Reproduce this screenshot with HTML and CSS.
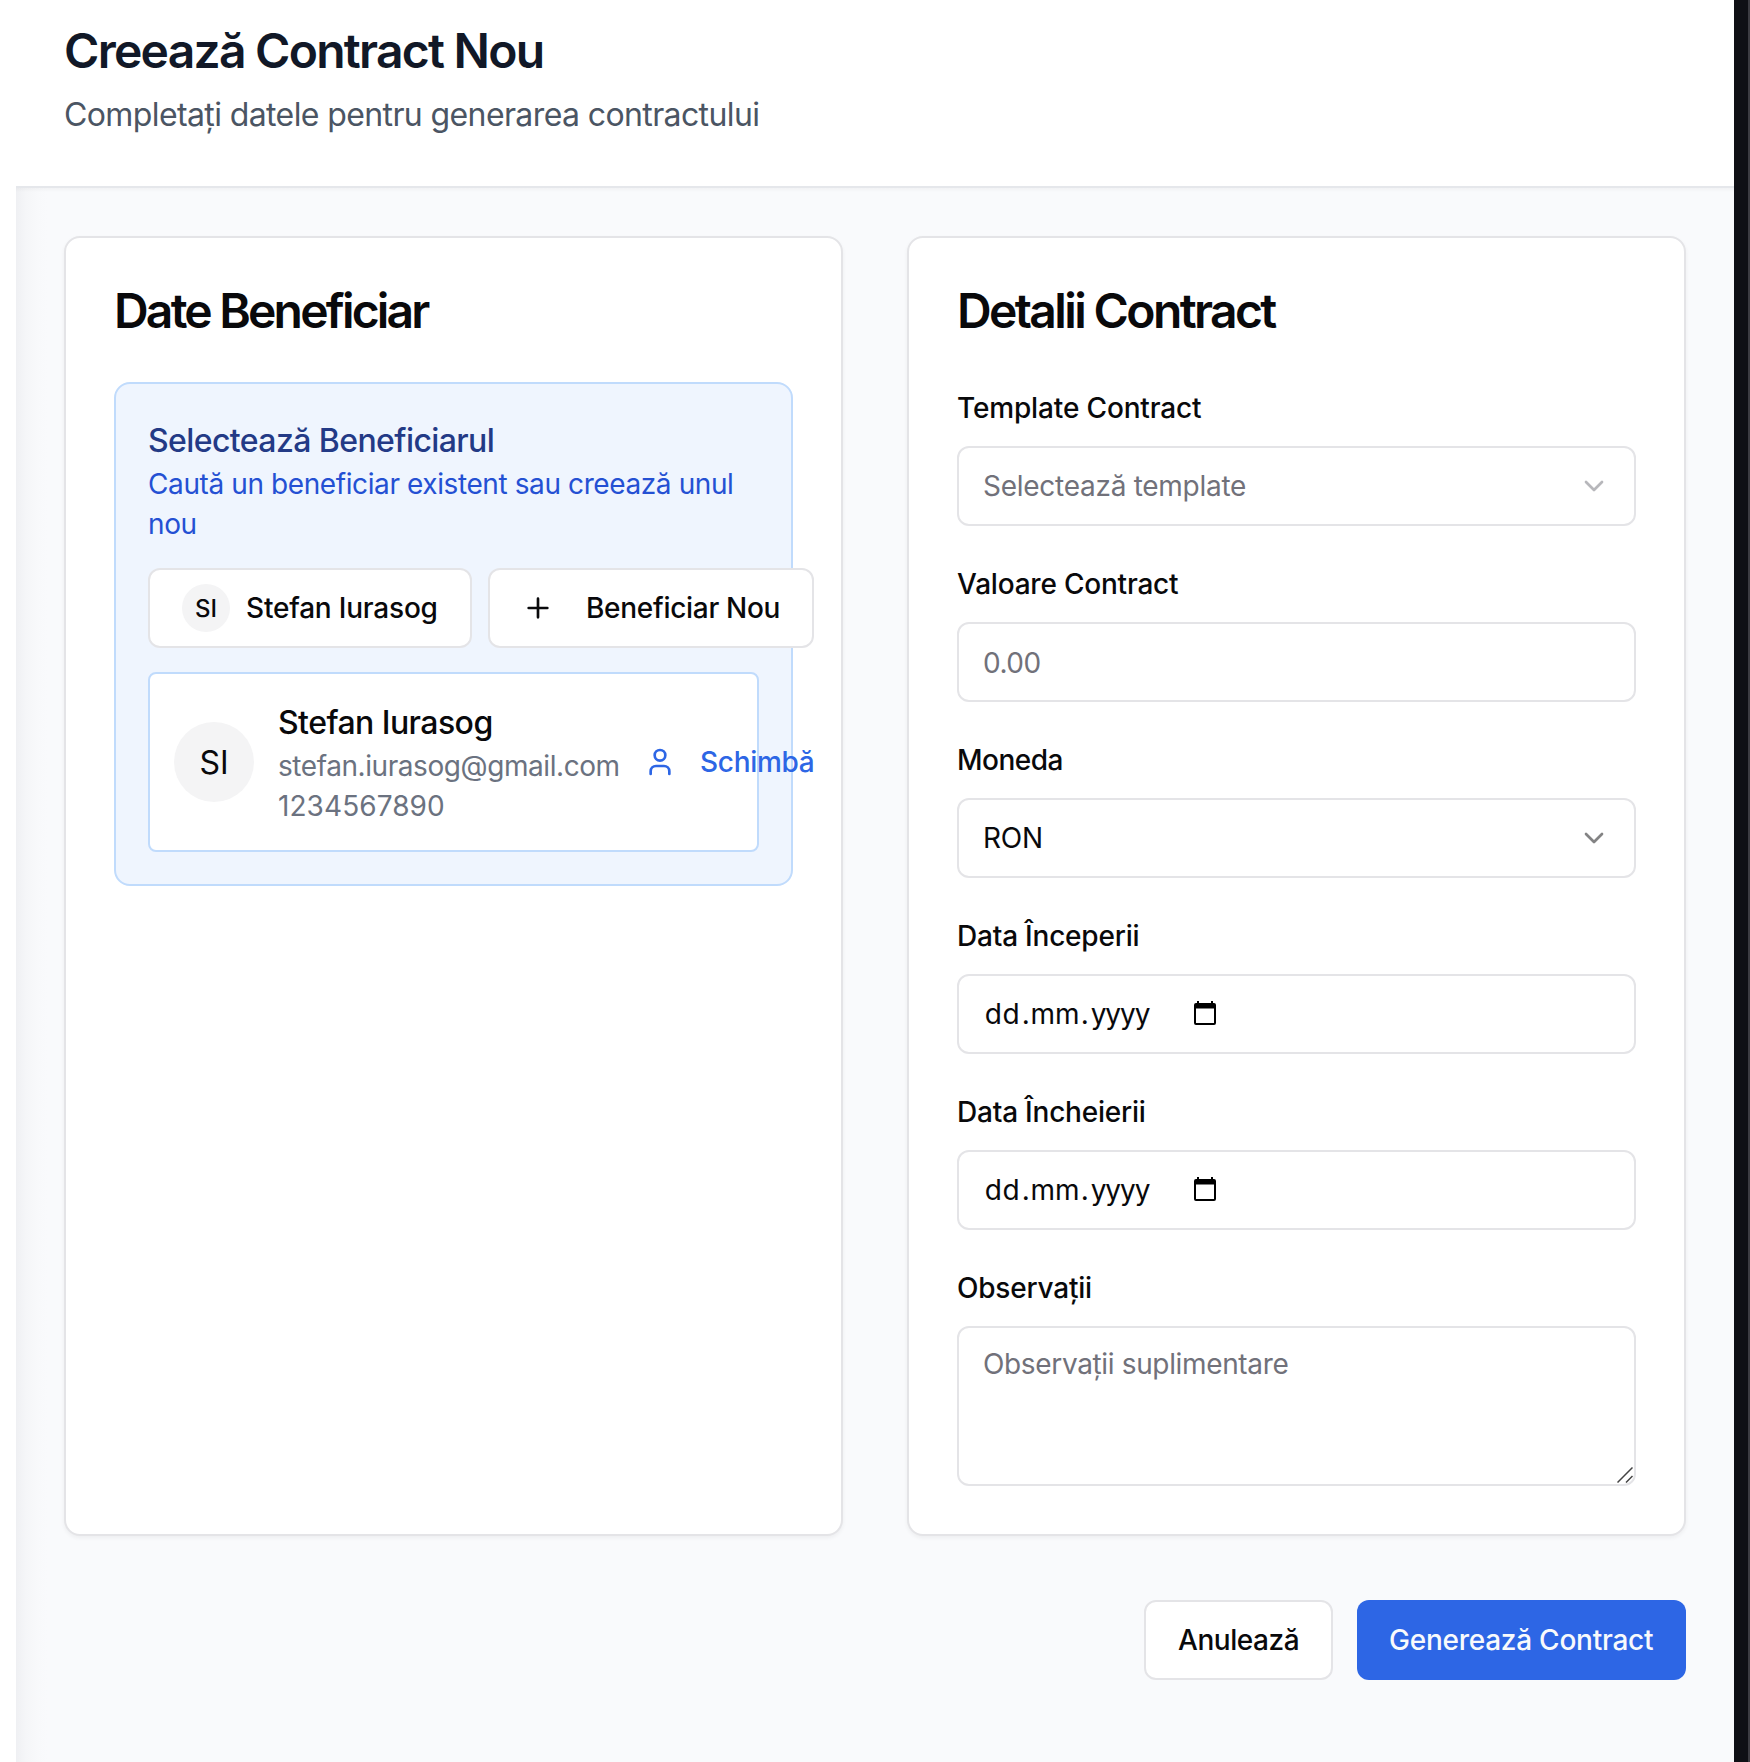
FILE: index.html
```html
<!DOCTYPE html>
<html lang="ro">
<head>
<meta charset="utf-8">
<title>Creează Contract Nou</title>
<link rel="stylesheet" href="styles.css">
</head>
<body>
<div class="window">
  <div class="app">
    <header class="header">
      <h1 class="header-title">Creează Contract Nou</h1>
      <p class="header-subtitle">Completați datele pentru generarea contractului</p>
    </header>
    <main class="main">
      <div class="cards">
        <section class="card">
          <h2 class="card-title card-title-tight">Date Beneficiar</h2>
          <div class="picker">
            <h3 class="picker-title">Selectează Beneficiarul</h3>
            <p class="picker-text">Caută un beneficiar existent sau creează unul nou</p>
            <div class="picker-actions">
              <button class="btn btn-person" type="button"><span class="avatar avatar-sm">SI</span><span>Stefan Iurasog</span></button>
              <button class="btn btn-new" type="button">
                <svg class="icon" viewBox="0 0 24 24"><path d="M5 12h14M12 5v14"/></svg>
                <span>Beneficiar Nou</span>
              </button>
            </div>
            <div class="person">
              <span class="avatar">SI</span>
              <div class="person-info">
                <div class="person-name">Stefan Iurasog</div>
                <div class="person-mail">stefan.iurasog@gmail.com</div>
                <div class="person-phone">1234567890</div>
              </div>
              <button class="btn-ghost" type="button">
                <svg class="icon" viewBox="0 0 24 24"><path d="M19 21v-2a4 4 0 0 0-4-4H9a4 4 0 0 0-4 4v2"/><circle cx="12" cy="7" r="4"/></svg>
                <span>Schimbă</span>
              </button>
            </div>
          </div>
        </section>
        <section class="card">
          <h2 class="card-title">Detalii Contract</h2>
          <form class="form">
            <div class="field">
              <label class="label label-template">Template Contract</label>
              <div class="control control-select placeholder"><span>Selectează template</span><svg class="icon chevron" viewBox="0 0 24 24"><path d="m6 9 6 6 6-6"/></svg></div>
            </div>
            <div class="field">
              <label class="label" for="amount">Valoare Contract</label>
              <input class="control control-amount" id="amount" type="text" placeholder="0.00">
            </div>
            <div class="field">
              <label class="label label-currency">Moneda</label>
              <div class="control control-select currency"><span>RON</span><svg class="icon chevron" viewBox="0 0 24 24"><path d="m6 9 6 6 6-6"/></svg></div>
            </div>
            <div class="field">
              <label class="label">Data Începerii</label>
              <div class="control date"><span class="day">dd</span><span class="dot">.</span><span class="month">mm</span><span class="dot">.</span><span class="year">yyyy</span><svg class="calendar" viewBox="0 0 22 24"><path fill-rule="evenodd" d="M3 0h2v2h12V0h2v2h1a2 2 0 0 1 2 2v18a2 2 0 0 1-2 2H2a2 2 0 0 1-2-2V4a2 2 0 0 1 2-2h1zM2 7.500v14.500h18V7.500z"/></svg></div>
            </div>
            <div class="field">
              <label class="label">Data Încheierii</label>
              <div class="control date"><span class="day">dd</span><span class="dot">.</span><span class="month">mm</span><span class="dot">.</span><span class="year">yyyy</span><svg class="calendar" viewBox="0 0 22 24"><path fill-rule="evenodd" d="M3 0h2v2h12V0h2v2h1a2 2 0 0 1 2 2v18a2 2 0 0 1-2 2H2a2 2 0 0 1-2-2V4a2 2 0 0 1 2-2h1zM2 7.500v14.500h18V7.500z"/></svg></div>
            </div>
            <div class="field">
              <label class="label" for="notes">Observații</label>
              <div class="notes">
                <textarea class="control control-area" id="notes" placeholder="Observații suplimentare"></textarea>
                <svg class="grip" viewBox="0 0 16 16"><path d="M.5 15.500l15-15M9 15.500l6.500-6.500"/></svg>
              </div>
            </div>
          </form>
        </section>
      </div>
      <div class="footer">
        <button class="btn btn-cancel" type="button">Anulează</button>
        <button class="btn btn-primary" type="button">Generează Contract</button>
      </div>
    </main>
  </div>
</div>
</body>
</html>
```

FILE: styles.css
```css
* { box-sizing: border-box; }
body {
  margin: 0;
  font-family: Inter, "Noto Sans", sans-serif;
  font-size: 28px;
  line-height: 40px;
  color: #09090b;
  background: #0f1015;
}
h1, h2, h3, p { margin: 0; }
button, input, textarea { font: inherit; color: inherit; letter-spacing: inherit; }

.window {
  height: 1762px;
  padding-right: 14px;
  border-right: 2px solid #3c3c42;
  background: #0f1015;
  overflow: hidden;
}
.app {
  display: flex;
  flex-direction: column;
  height: 100%;
  padding-left: 16px;
  background: #fff;
}

.header {
  height: 188px;
  padding: 19px 48px 0;
  border-bottom: 2px solid #e5e7eb;
}
.header-title {
  font-size: 48px;
  line-height: 64px;
  font-weight: 620;
  letter-spacing: -1.740px;
  color: #111827;
}
.header-subtitle {
  margin-top: 8px;
  font-size: 32px;
  line-height: 48px;
  letter-spacing: -.610px;
  color: #4b5563;
}

.main {
  flex: 1;
  padding: 48px;
  background:
    linear-gradient(rgba(0, 0, 0, .03), transparent 4px),
    linear-gradient(90deg, #eff0f3 0, #f5f6f8 10px, #f8f9fb 22px, #f9fafc 32px);
}
.cards {
  display: grid;
  grid-template-columns: 1fr 1fr;
  gap: 64px;
}
.card {
  min-width: 0;
  height: 1300px;
  padding: 48px;
  background: #fff;
  border: 2px solid #e4e4e7;
  border-radius: 16px;
  box-shadow: 0 2px 4px rgba(0, 0, 0, .05);
}
.card-title {
  height: 48px;
  padding-top: 1px;
  font-size: 48px;
  line-height: 48px;
  font-weight: 620;
  letter-spacing: -2.620px;
}
.card-title-tight { letter-spacing: -2.800px; }

.picker {
  margin-top: 48px;
  padding: 32px;
  background: #eff5fe;
  border: 2px solid #c0dbfc;
  border-radius: 16px;
}
.picker-title {
  height: 48px;
  padding-top: 1px;
  font-size: 32px;
  line-height: 48px;
  font-weight: 500;
  letter-spacing: -.590px;
  color: #233a86;
}
.picker-text {
  letter-spacing: -.400px;
  color: #2450d3;
}
.picker-actions {
  display: flex;
  gap: 16px;
  margin: 24px 0;
}

.btn {
  display: flex;
  flex: none;
  align-items: center;
  justify-content: flex-start;
  gap: 16px;
  height: 80px;
  padding: 0 32px;
  background: #fff;
  border: 2px solid #e4e4e7;
  border-radius: 12px;
  font-weight: 500;
  letter-spacing: -.290px;
  white-space: nowrap;
}
.btn-person { width: 324px; letter-spacing: -.200px; }
.btn-new { width: 326px; gap: 32px; }
.btn-cancel { width: 189px; letter-spacing: -.450px; }
.btn-primary {
  width: 329px;
  border: 0;
  background: #2d66e5;
  color: #f8fafc;
  letter-spacing: -.250px;
}

.icon {
  flex: none;
  width: 32px;
  height: 32px;
  fill: none;
  stroke: currentColor;
  stroke-width: 2;
  stroke-linecap: round;
  stroke-linejoin: round;
}
.avatar {
  display: flex;
  flex: none;
  align-items: center;
  justify-content: center;
  width: 80px;
  height: 80px;
  padding-top: 1px;
  border-radius: 50%;
  background: #f4f4f5;
  font-size: 32px;
  letter-spacing: 0;
}
.avatar-sm { width: 48px; height: 48px; font-size: 24px; }

.person {
  display: flex;
  align-items: center;
  padding: 24px;
  background: #fff;
  border: 2px solid #c0dbfc;
  border-radius: 8px;
}
.person-info {
  flex: none;
  width: 342px;
  margin-left: 24px;
  white-space: nowrap;
  color: #6b7280;
}
.person-name {
  height: 48px;
  padding-top: 1px;
  font-size: 32px;
  line-height: 48px;
  font-weight: 500;
  letter-spacing: -.550px;
  color: #09090b;
}
.person-mail { letter-spacing: -.430px; }
.person-phone { letter-spacing: .070px; }
.btn-ghost {
  display: flex;
  flex: none;
  align-items: center;
  gap: 24px;
  padding: 0 0 0 24px;
  background: none;
  border: 0;
  font-weight: 500;
  letter-spacing: -.300px;
  color: #2d66e5;
}

.form {
  display: flex;
  flex-direction: column;
  gap: 32px;
  margin-top: 48px;
}
.label {
  display: block;
  margin-bottom: 12px;
  padding-top: 6px;
  line-height: 40px;
  height: 52px;
  font-weight: 500;
  letter-spacing: -.210px;
}
.label-template { letter-spacing: -.150px; }
.label-currency { letter-spacing: -.500px; }
.control {
  display: flex;
  align-items: center;
  width: 100%;
  height: 80px;
  padding: 0 24px;
  background: #fff;
  border: 2px solid #e4e4e7;
  border-radius: 12px;
  outline: 0;
  letter-spacing: -.500px;
}
.control::placeholder { color: #71717a; opacity: 1; }
.control-amount { padding-top: 2px; }
.control-select { justify-content: space-between; }
.placeholder { color: #71717a; letter-spacing: -.270px; }
.currency { letter-spacing: -.200px; }
.chevron { opacity: .5; }
.date span { text-align: center; }
.date .day { width: 38px; padding-left: 1px; letter-spacing: .500px; }
.date .dot { width: 9px; }
.date .month { width: 50px; letter-spacing: 0; }
.date .year { width: 62px; letter-spacing: -1.100px; }
.calendar { width: 22px; height: 24px; margin: 0 0 2px 43px; fill: #000; }
.notes { position: relative; height: 160px; }
.control-area {
  height: 160px;
  padding: 16px 24px;
  resize: none;
  letter-spacing: -.350px;
}
.grip {
  position: absolute;
  right: 3px;
  bottom: 3px;
  width: 16px;
  height: 16px;
  fill: none;
  stroke: #444;
  stroke-width: 1.500;
}

.footer {
  display: flex;
  justify-content: flex-end;
  gap: 24px;
  margin-top: 64px;
}
```
